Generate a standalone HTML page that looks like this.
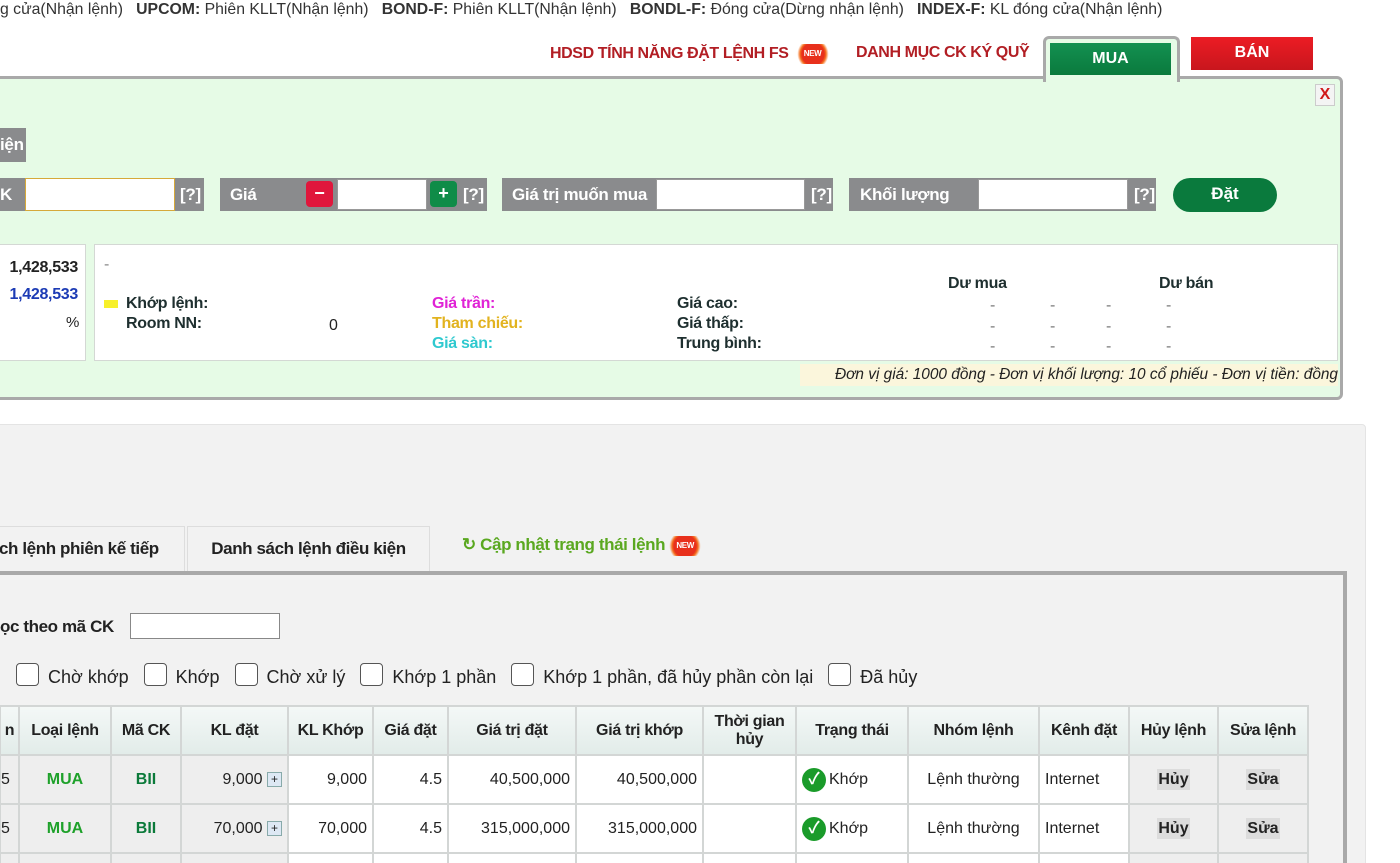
<!DOCTYPE html>
<html><head><meta charset="utf-8">
<style>
*{box-sizing:border-box;margin:0;padding:0}
html,body{width:1400px;height:863px;overflow:hidden}
body{background:#fff;font-family:"Liberation Sans Narrow","Liberation Sans","Noto Sans CJK SC",sans-serif;font-size:16px;color:#222;position:relative}
.a{position:absolute}
.top{font-family:"Liberation Sans",sans-serif;font-size:15.8px;color:#333;white-space:nowrap;top:1px;left:0;line-height:18px}
.lbl{background:#8a8b8d;color:#fff;font-weight:bold;font-size:17px;line-height:33px;height:33px;letter-spacing:-0.3px}
.inp{background:#fff;border:1px solid #999;height:33px}
.b{font-weight:bold}
.newb{display:inline-block;width:30px;height:20px;vertical-align:middle;background:radial-gradient(circle,#e8301c 50%,#f5701f 58%,transparent 70%);color:#fff;font-size:8px;text-align:center;line-height:20px;font-weight:bold}
table{border-collapse:collapse;position:absolute;left:-1px;top:705px;background:#fff;table-layout:fixed;width:1308px}
td,th{border:2px solid #d3d6d5;font-size:16px;height:49px;padding:0 5px;white-space:nowrap;overflow:hidden}
th{background:linear-gradient(#f4f8f7,#e2ece9);font-weight:bold;line-height:18px;color:#222;letter-spacing:-0.3px;white-space:normal}
.g{background:#eeeeee}
.r{text-align:right}.c{text-align:center}
.chk{display:inline-block;width:23px;height:23px;border:1.5px solid #555;border-radius:4px;background:#fff;vertical-align:-3px;margin-right:9px}
.ok{display:inline-block;width:24px;height:24px;border-radius:50%;background:#1a9b2a;color:#fff;text-align:center;line-height:24px;font-weight:bold;font-size:16px;vertical-align:middle;margin-right:3px}
.bt{background:#dcdcdc;font-weight:bold;padding:2px 1px}
</style></head><body>
<div class="a top">g cửa(Nhận lệnh) &nbsp;&nbsp;<b>UPCOM:</b> Phiên KLLT(Nhận lệnh) &nbsp;&nbsp;<b>BOND-F:</b> Phiên KLLT(Nhận lệnh) &nbsp;&nbsp;<b>BONDL-F:</b> Đóng cửa(Dừng nhận lệnh) &nbsp;&nbsp;<b>INDEX-F:</b> KL đóng cửa(Nhận lệnh)</div>

<div class="a b" style="left:550px;top:44px;color:#b21e24;font-size:16px;letter-spacing:-0.4px">HDSD TÍNH NĂNG ĐẶT LỆNH FS <span class="newb" style="width:40px">NEW</span></div>
<div class="a b" style="left:856px;top:44px;color:#b21e24;font-size:16px;letter-spacing:-0.4px">DANH MỤC CK KÝ QUỸ</div>

<div class="a" style="left:-4px;top:76px;width:1347px;height:324px;background:#e6fbe6;border:3px solid #a9a9a9;border-radius:0 6px 6px 0"></div>
<div class="a" style="left:1043px;top:36px;width:137px;height:46px;background:#e6fbe6;border:3px solid #a9a9a9;border-bottom:none;border-radius:6px 6px 0 0"></div>
<div class="a b" style="left:1050px;top:43px;width:121px;height:32px;background:linear-gradient(#139051,#0a7a3d);color:#fff;text-align:center;line-height:32px;font-size:16px">MUA</div>
<div class="a b" style="left:1191px;top:37px;width:122px;height:33px;background:linear-gradient(#ec1c24,#c8161d);color:#fff;text-align:center;line-height:32px;font-size:16px">BÁN</div>
<div class="a b" style="left:1315px;top:84px;width:20px;height:22px;border:1px solid #ccc;background:#f4f4f4;color:#d01a1a;text-align:center;line-height:20px">X</div>

<div class="a lbl" style="left:0;top:128px;width:26px;height:34px;line-height:34px;overflow:hidden">iện</div>
<div class="a lbl" style="left:0;top:178px;width:204px"></div>
<div class="a lbl" style="left:0;top:178px">K</div>
<div class="a inp" style="left:25px;top:178px;width:150px;border:1px solid #d6a93a"></div>
<div class="a lbl" style="left:180px;top:178px">[?]</div>

<div class="a lbl" style="left:220px;top:178px;width:267px;padding-left:10px">Giá</div>
<div class="a b" style="left:306px;top:181px;width:27px;height:26px;background:#e0163c;border-radius:4px;color:#fff;text-align:center;line-height:25px;font-size:18px">−</div>
<div class="a inp" style="left:337px;top:179px;width:90px;height:31px"></div>
<div class="a b" style="left:430px;top:181px;width:27px;height:26px;background:#0f8c48;border-radius:4px;color:#fff;text-align:center;line-height:25px;font-size:18px">+</div>
<div class="a lbl" style="left:463px;top:178px;background:none">[?]</div>

<div class="a lbl" style="left:502px;top:178px;width:331px;padding-left:10px">Giá trị muốn mua</div>
<div class="a inp" style="left:656px;top:179px;width:149px;height:31px"></div>
<div class="a lbl" style="left:811px;top:178px;background:none">[?]</div>

<div class="a lbl" style="left:849px;top:178px;width:307px;padding-left:11px">Khối lượng</div>
<div class="a inp" style="left:978px;top:179px;width:150px;height:31px"></div>
<div class="a lbl" style="left:1134px;top:178px;background:none">[?]</div>

<div class="a b" style="left:1173px;top:178px;width:104px;height:34px;border-radius:17px;background:#0a7a3d;color:#fff;text-align:center;line-height:32px;font-size:17px">Đặt</div>

<div class="a" style="left:-2px;top:244px;width:88px;height:117px;background:#fff;border:1px solid #d4d8d4"></div>
<div class="a b" style="right:1322px;top:259px;font-size:16px;letter-spacing:-0.3px">1,428,533</div>
<div class="a b" style="right:1322px;top:286px;font-size:16px;color:#1c3bb5;letter-spacing:-0.3px">1,428,533</div>
<div class="a" style="left:66px;top:314px;font-size:15px">%</div>

<div class="a" style="left:94px;top:244px;width:1244px;height:117px;background:#fff;border:1px solid #d4d8d4"></div>
<div class="a" style="left:104px;top:256px;color:#888">-</div>
<div class="a" style="left:104px;top:300px;width:14px;height:8px;background:#f7f02a"></div>
<div class="a b" style="left:126px;top:295px;color:#1e2f2f;letter-spacing:-0.3px">Khớp lệnh:</div>
<div class="a b" style="left:126px;top:315px;color:#1e2f2f;letter-spacing:-0.3px">Room NN:</div>
<div class="a" style="left:329px;top:317px">0</div>
<div class="a b" style="left:432px;top:295px;color:#e022d6;letter-spacing:-0.3px">Giá trần:</div>
<div class="a b" style="left:432px;top:315px;color:#e2b31f;letter-spacing:-0.3px">Tham chiếu:</div>
<div class="a b" style="left:432px;top:335px;color:#2fc9cf;letter-spacing:-0.3px">Giá sàn:</div>
<div class="a b" style="left:677px;top:295px;color:#1e2f2f;letter-spacing:-0.3px">Giá cao:</div>
<div class="a b" style="left:677px;top:315px;color:#1e2f2f;letter-spacing:-0.3px">Giá thấp:</div>
<div class="a b" style="left:677px;top:335px;color:#1e2f2f;letter-spacing:-0.3px">Trung bình:</div>
<div class="a b" style="left:948px;top:275px;color:#1e2f2f;letter-spacing:-0.3px">Dư mua</div>
<div class="a b" style="left:1159px;top:275px;color:#1e2f2f;letter-spacing:-0.3px">Dư bán</div>
<div class="a" style="left:990px;top:296px;color:#777;line-height:20.5px">-<br>-<br>-</div>
<div class="a" style="left:1050px;top:296px;color:#777;line-height:20.5px">-<br>-<br>-</div>
<div class="a" style="left:1106px;top:296px;color:#777;line-height:20.5px">-<br>-<br>-</div>
<div class="a" style="left:1166px;top:296px;color:#777;line-height:20.5px">-<br>-<br>-</div>
<div class="a" style="left:800px;top:364px;width:538px;height:22px;background:#fbf6dc"></div>
<div class="a" style="right:62px;top:366px;font-family:'Liberation Sans',sans-serif;font-style:italic;font-size:15.4px;color:#222;white-space:nowrap">Đơn vị giá: 1000 đồng - Đơn vị khối lượng: 10 cổ phiếu - Đơn vị tiền: đồng</div>

<div class="a" style="left:-2px;top:424px;width:1368px;height:440px;background:#f2f2f2;border:1px solid #e4e4e4;border-radius:0 4px 0 0"></div>
<div class="a b" style="left:-2px;top:526px;width:187px;height:46px;background:#f2f2f2;border:1px solid #ddd;font-size:17px;line-height:44px;letter-spacing:-0.4px;white-space:nowrap;overflow:hidden">ch lệnh phiên kế tiếp</div>
<div class="a b" style="left:187px;top:526px;width:243px;height:46px;background:#f2f2f2;border:1px solid #ddd;font-size:17px;line-height:44px;text-align:center;letter-spacing:-0.4px">Danh sách lệnh điều kiện</div>
<div class="a b" style="left:462px;top:535px;color:#5aa820;font-size:17px;letter-spacing:-0.4px">↻ Cập nhật trạng thái lệnh<span class="newb" style="width:40px">NEW</span></div>

<div class="a" style="left:-4px;top:571px;width:1351px;height:300px;border:4px solid #a9a9a9;border-bottom:none;background:#f2f2f2"></div>
<div class="a b" style="left:0;top:617px;font-size:17px;letter-spacing:-0.4px">ọc theo mã CK</div>
<div class="a" style="left:130px;top:613px;width:150px;height:26px;background:#fff;border:1px solid #888"></div>
<div class="a" style="left:16px;top:663px;font-size:18px;white-space:nowrap">
<span class="chk"></span>Chờ khớp &nbsp;&nbsp;<span class="chk"></span>Khớp &nbsp;&nbsp;<span class="chk"></span>Chờ xử lý &nbsp;&nbsp;<span class="chk"></span>Khớp 1 phần &nbsp;&nbsp;<span class="chk"></span>Khớp 1 phần, đã hủy phần còn lại &nbsp;&nbsp;<span class="chk"></span>Đã hủy</div>

<table>
<colgroup><col style="width:19px"><col style="width:92px"><col style="width:70px"><col style="width:107px"><col style="width:85px"><col style="width:75px"><col style="width:128px"><col style="width:127px"><col style="width:93px"><col style="width:112px"><col style="width:131px"><col style="width:90px"><col style="width:89px"><col style="width:90px"></colgroup>
<tr><th style="padding:0">n</th><th>Loại lệnh</th><th>Mã CK</th><th>KL đặt</th><th>KL Khớp</th><th>Giá đặt</th><th>Giá trị đặt</th><th>Giá trị khớp</th><th>Thời gian<br>hủy</th><th>Trạng thái</th><th>Nhóm lệnh</th><th>Kênh đặt</th><th>Hủy lệnh</th><th>Sửa lệnh</th></tr>
<tr><td class="g" style="padding:0">5</td><td class="g c b" style="color:#1ea12a">MUA</td><td class="g c b" style="color:#0b7a3a">BII</td><td class="g r">9,000 <span style="display:inline-block;width:15px;height:15px;border:1px solid #8aa;background:#dde8f4;font-size:12px;line-height:13px;text-align:center;vertical-align:middle">+</span></td><td class="r">9,000</td><td class="r">4.5</td><td class="r">40,500,000</td><td class="r">40,500,000</td><td></td><td><span class="ok">✓</span>Khớp</td><td class="c">Lệnh thường</td><td>Internet</td><td class="g c"><span class="bt">Hủy</span></td><td class="g c"><span class="bt">Sửa</span></td></tr>
<tr><td class="g" style="padding:0">5</td><td class="g c b" style="color:#1ea12a">MUA</td><td class="g c b" style="color:#0b7a3a">BII</td><td class="g r">70,000 <span style="display:inline-block;width:15px;height:15px;border:1px solid #8aa;background:#dde8f4;font-size:12px;line-height:13px;text-align:center;vertical-align:middle">+</span></td><td class="r">70,000</td><td class="r">4.5</td><td class="r">315,000,000</td><td class="r">315,000,000</td><td></td><td><span class="ok">✓</span>Khớp</td><td class="c">Lệnh thường</td><td>Internet</td><td class="g c"><span class="bt">Hủy</span></td><td class="g c"><span class="bt">Sửa</span></td></tr>
<tr><td class="g"></td><td class="g"></td><td class="g"></td><td class="g"></td><td></td><td></td><td></td><td></td><td></td><td></td><td></td><td></td><td class="g"></td><td class="g"></td></tr>
</table>
</body></html>
